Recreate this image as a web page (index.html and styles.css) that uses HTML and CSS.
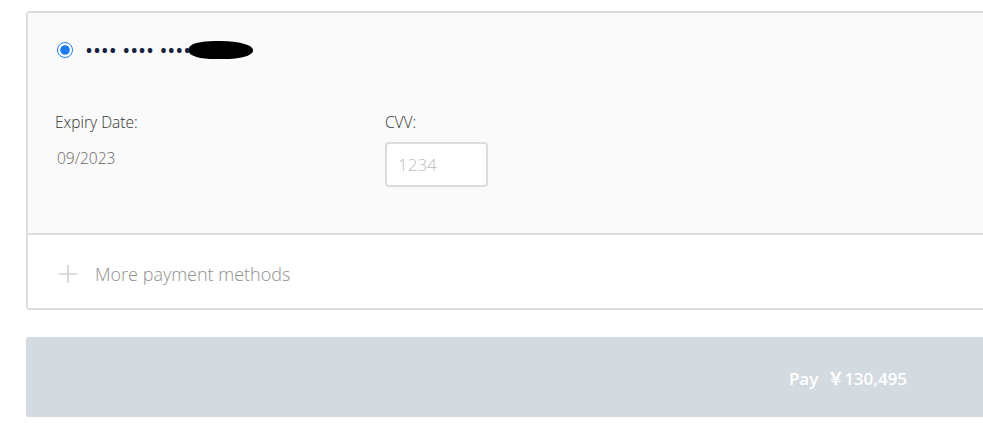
FILE: index.html
```html
<!DOCTYPE html>
<html lang="en">

<head>
    <meta charset="UTF-8">
    <meta name="viewport" content="width=device-width, initial-scale=1.0">
    <title>Payment</title>
    <link rel="stylesheet" href="styles.css">
</head>

<body>
    <div id="checkout">
        <div class="methods">
            <div class="saved-card">
                <label class="card-row">
                    <input type="radio" name="card" checked>
                    <span class="card-number">•••• •••• ••••</span>
                    <span class="redacted"></span>
                </label>
                <div class="card-fields">
                    <div class="field expiry">
                        <p>Expiry Date:</p>
                        <span class="value">09/2023</span>
                    </div>
                    <div class="field">
                        <p>CVV:</p>
                        <input type="text" class="cvv" placeholder="1234">
                    </div>
                </div>
            </div>
            <div class="more">
                <svg width="18" height="18" viewBox="0 0 18 18">
                    <path d="M9 0v18M0 9h18" stroke="#cfd3d6" stroke-width="1.6" fill="none" />
                </svg>
                <span>More payment methods</span>
            </div>
        </div>
        <button class="pay">Pay &nbsp;￥130,495</button>
    </div>
</body>

</html>
```

FILE: styles.css
```css
body {
    margin: 0;
    overflow: hidden;
    font-family: "Open Sans", "Noto Sans CJK JP", sans-serif;
    background: white;
}

#checkout {
    width: 1644px;
    padding: 11px 0 0 26px;
}

.methods {
    border: 2px solid #dcdcdc;
    border-radius: 4px 0 0 4px;
}

.saved-card {
    background-color: #fafafa;
    height: 220px;
    border-bottom: 2px solid #dcdcdc;
}

.card-row {
    display: flex;
    align-items: center;
    padding: 26px 0 0 28px;
    height: 22px;
}

.card-row input {
    margin: 0 13px 0 1px;
    width: 16px;
    height: 16px;
    accent-color: #1a7cf0;
}

.card-number {
    color: #14213d;
    font-size: 16px;
    font-weight: bold;
    letter-spacing: 1.9px;
    word-spacing: -0.5px;
}

.redacted {
    display: inline-block;
    width: 64px;
    height: 18px;
    margin-left: -3px;
    background: black;
    border-radius: 40% 50% 45% 40%;
}

.card-fields {
    display: flex;
    padding: 50px 0 0 27px;
}

.field p {
    margin: 0 0 9px 0;
    color: #333;
    font-size: 15.5px;
    font-weight: 300;
}

.expiry {
    width: 330px;
}

.value {
    display: block;
    margin: 14px 0 0 2px;
    color: #666;
    font-size: 15.5px;
    font-weight: 300;
}

.cvv {
    width: 77px;
    height: 41px;
    margin: 0;
    padding: 0 11px;
    border: 2px solid #dcdcdc;
    border-radius: 4px;
    background: white;
    font-family: "Open Sans", sans-serif;
    font-size: 17px;
    font-weight: 300;
}

.cvv::placeholder {
    color: #bdbdbd;
}

.more {
    display: flex;
    align-items: center;
    height: 73px;
    padding: 5px 0 0 31px;
    box-sizing: border-box;
    background: white;
}

.more svg {
    margin-right: 18px;
}

.more span {
    color: #8f8f8f;
    font-size: 18px;
    font-weight: 300;
}

.pay {
    display: block;
    width: 100%;
    height: 80px;
    margin-top: 27px;
    border: none;
    border-radius: 2px;
    background-color: #d3dae0;
    color: white;
    font-family: "Open Sans", "Noto Sans CJK JP", sans-serif;
    font-size: 17px;
    font-weight: 600;
}
```
